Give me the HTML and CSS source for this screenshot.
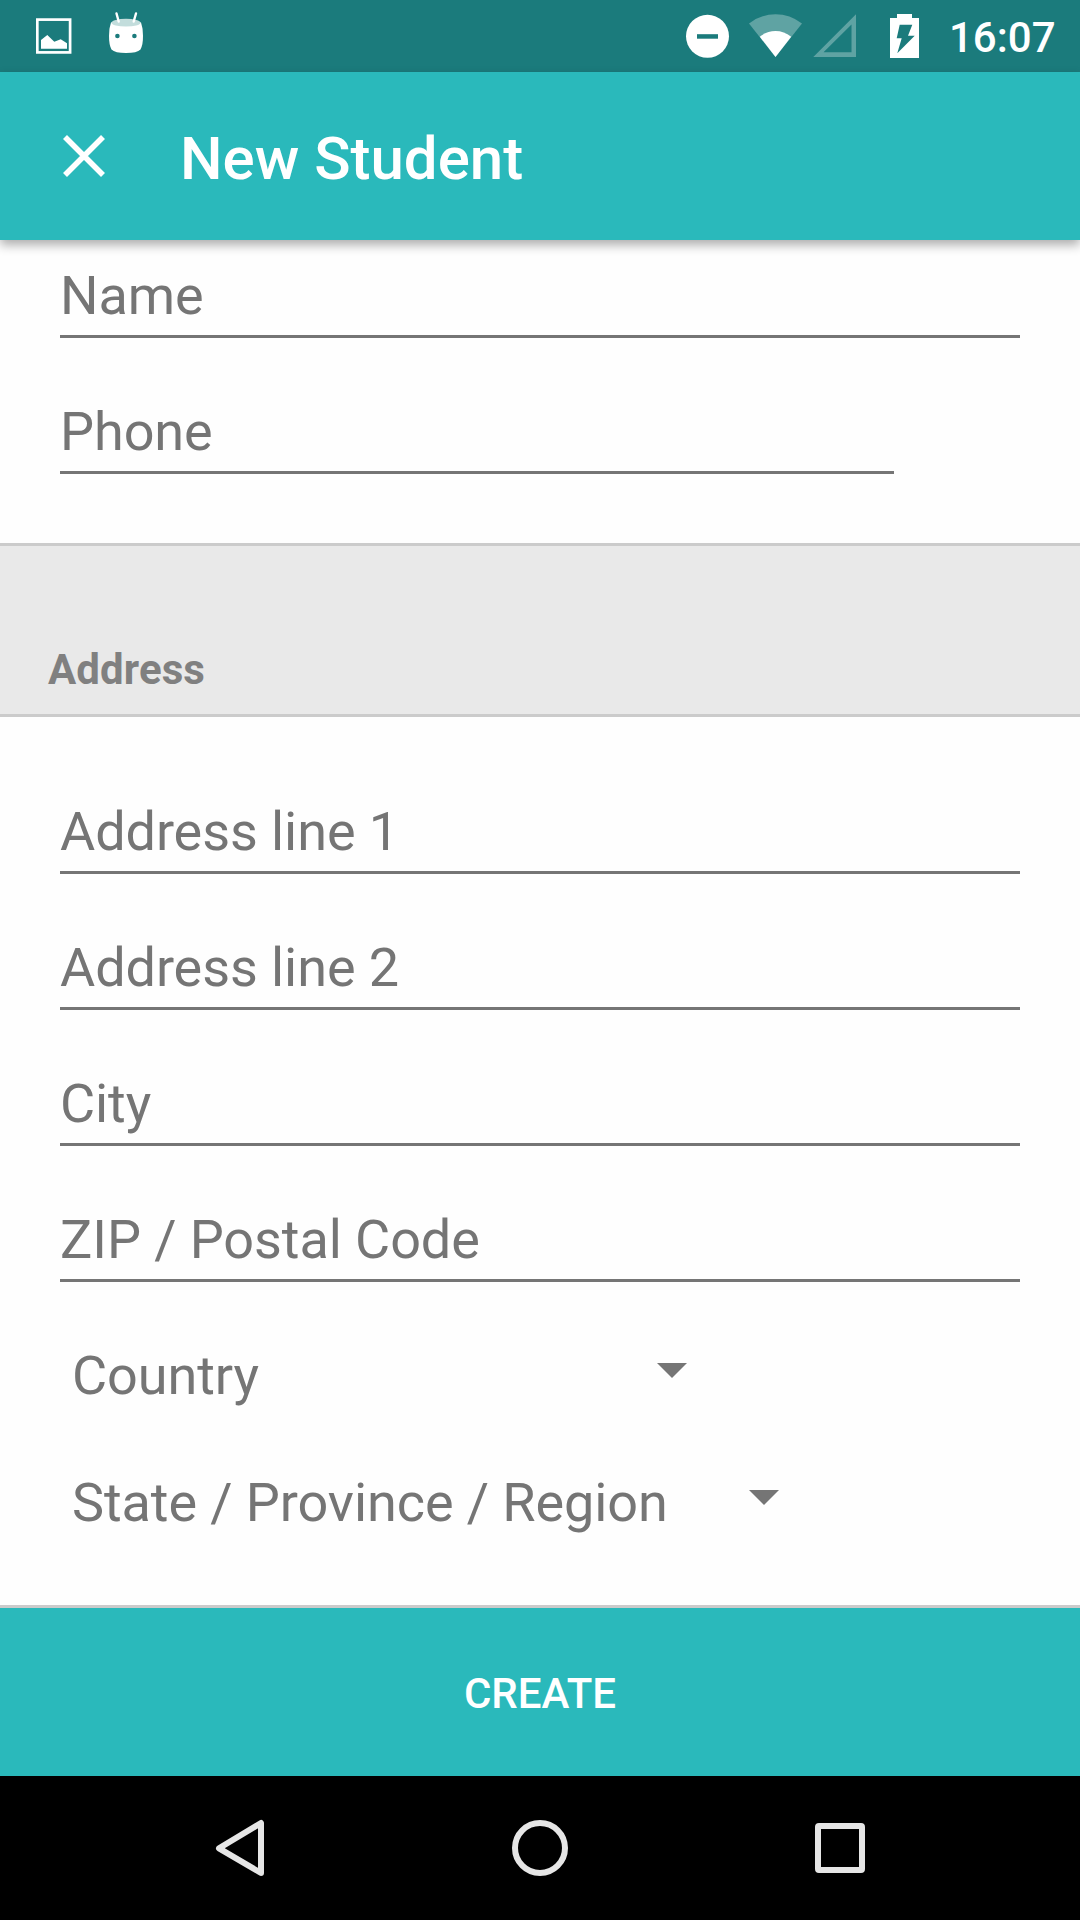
FILE: index.html
```html
<!DOCTYPE html>
<html lang="en">
<head>
<meta charset="utf-8">
<title>New Student</title>
<link rel="stylesheet" href="styles.css">
</head>
<body>
<div class="screen">
  <div class="status-bar">
    <svg class="notifications" width="110" height="72" viewBox="36 0 110 72">
      <rect x="37.3" y="19.6" width="32.8" height="32.8" fill="none" stroke="#fff" stroke-width="2.7"/>
      <path d="M41 48.8V40l6.3-5 7 6.7 6.4-2.4 6.3 3.9v5.6z" fill="#fff"/>
      <path d="M111 22.5Q126 17 141 22.5Q143 28 143 36Q143 45 140.500 49.500Q137 53 126 53Q115 53 111.500 49.500Q109 45 109 36Q109 28 111 22.500Z" fill="#fff"/>
      <ellipse cx="126" cy="22.700" rx="14.500" ry="3.900" fill="#c3dddc"/>
      <path d="M116.500 13.500l2.200 8M136 13.500l-2.300 8" stroke="#fff" stroke-width="2.400" stroke-linecap="round"/>
      <circle cx="117.400" cy="36" r="2.300" fill="#1b7b7c"/>
      <circle cx="134.400" cy="36" r="2.300" fill="#1b7b7c"/>
    </svg>
    <svg class="indicators" width="236" height="72" viewBox="686 0 236 72">
      <circle cx="707.500" cy="36.300" r="21.500" fill="#fff"/>
      <rect x="697" y="34.200" width="21" height="4.500" fill="#1b7b7c"/>
      <path d="M775.500 57L749 23.500Q761 14.300 775.500 14.300T802 23.500Z" fill="#fff" fill-opacity=".3"/>
      <path d="M775.500 57L759.800 36.700Q767 31 775.500 31T791.200 36.700Z" fill="#fff"/>
      <path d="M813.300 57H856V14.300zM823.500 52.300L851.500 24.500V52.300z" fill="#fff" fill-opacity=".3" fill-rule="evenodd"/>
      <path d="M890 18h7v-4h15v4h7v40h-29zM899.700 24.700L896.700 38.300H901.700L897.300 53.300L914.700 35.700H908L912.300 24.700Z" fill="#fff" fill-rule="evenodd"/>
    </svg>
    <span class="clock">16:07</span>
  </div>

  <header class="app-bar">
    <svg class="close" width="42" height="42" viewBox="0 0 42 42"><path d="M2 2l38 38M40 2L2 40" stroke="#fff" stroke-width="5.600"/></svg>
    <h1 class="title">New Student</h1>
  </header>

  <main class="form">
    <div class="fields contact">
      <div class="field">Name</div>
      <div class="field phone">Phone</div>
    </div>
    <h2 class="section">Address</h2>
    <div class="fields address">
      <div class="field">Address line 1</div>
      <div class="field">Address line 2</div>
      <div class="field">City</div>
      <div class="field">ZIP / Postal Code</div>
    </div>
    <div class="spinners">
      <div class="spinner country"><span>Country</span><svg class="caret" width="30" height="15" viewBox="0 0 30 15"><path d="M0 0h30L15 15z"/></svg></div>
      <div class="spinner region"><span>State / Province / Region</span><svg class="caret" width="30" height="15" viewBox="0 0 30 15"><path d="M0 0h30L15 15z"/></svg></div>
    </div>
  </main>

  <div class="create">CREATE</div>

  <nav class="nav-bar">
    <svg width="60" height="60" viewBox="0 0 60 60"><path d="M9 30.300L51 5v50z"/></svg>
    <svg width="60" height="60" viewBox="0 0 60 60"><circle cx="30" cy="30" r="25"/></svg>
    <svg width="60" height="60" viewBox="0 0 60 60"><rect x="8" y="8" width="44" height="44" rx="1"/></svg>
  </nav>
</div>
</body>
</html>
```
FILE: styles.css
```css
* {
  box-sizing: border-box;
}

body {
  margin: 0;
  font-family: Roboto, sans-serif;
  background: #fefefe;
}

svg {
  display: block;
  flex: none;
}

.screen {
  display: flex;
  flex-direction: column;
  width: 1080px;
  height: 1920px;
  overflow: hidden;
}

.status-bar {
  display: flex;
  align-items: center;
  flex: none;
  height: 72px;
  padding: 0 25px 0 36px;
  background: #1b7b7c;
}

.indicators {
  margin-left: auto;
}

.clock {
  width: 106px;
  margin-left: 27px;
  padding-top: 4px;
  color: #fff;
  font-size: 42px;
  font-weight: 500;
  line-height: 50px;
}

.app-bar {
  display: flex;
  align-items: center;
  flex: none;
  gap: 75px;
  height: 168px;
  padding-left: 63px;
  background: #2ab9bb;
  box-shadow: 0 5px 10px rgba(0, 0, 0, 0.32);
  z-index: 1;
}

.title {
  margin: 6px 0 0;
  color: #fff;
  font-size: 60px;
  font-weight: 500;
  line-height: 70px;
}

.form {
  flex: 1;
  border-bottom: 3px solid #cbcbcb;
  color: #757575;
  font-size: 54px;
  letter-spacing: -0.08px;
}

.fields {
  display: flex;
  flex-direction: column;
  gap: 62px;
}

.contact {
  padding: 24px 60px 69px;
}

.address {
  padding: 83px 60px 62px;
}

.field {
  height: 74px;
  border-bottom: 3px solid #757575;
  line-height: 64px;
}

.phone {
  width: 834px;
}

.section {
  display: flex;
  align-items: flex-end;
  height: 174px;
  margin: 0;
  padding: 0 48px 19px;
  border: solid #cbcbcb;
  border-width: 3px 0;
  background: #e9e9e9;
  color: #808080;
  font-size: 42px;
  font-weight: 700;
  letter-spacing: 0.1px;
  line-height: 50px;
}

.spinners {
  display: flex;
  flex-direction: column;
  gap: 63px;
  padding-left: 72px;
}

.spinner {
  display: flex;
  justify-content: space-between;
  align-items: center;
  height: 64px;
  line-height: 64px;
}

.country {
  width: 615px;
}

.region {
  width: 707px;
}

.caret {
  margin-bottom: 11px;
  fill: #757575;
}

.create {
  display: flex;
  align-items: center;
  justify-content: center;
  flex: none;
  height: 168px;
  padding-top: 2px;
  background: #2ab9bb;
  color: #fff;
  font-size: 42px;
  font-weight: 500;
}

.nav-bar {
  display: flex;
  align-items: center;
  justify-content: center;
  flex: none;
  gap: 240px;
  height: 144px;
  background: #000;
  fill: none;
  stroke: #e6e6e6;
  stroke-width: 6px;
  stroke-linejoin: round;
}
```
